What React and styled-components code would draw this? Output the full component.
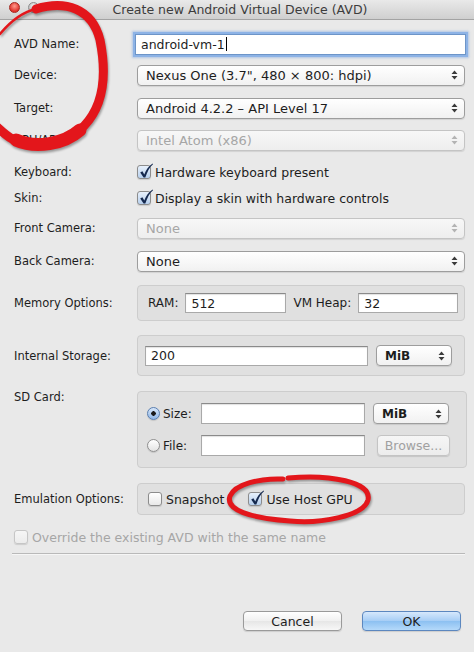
import React from "react";
import styled, { createGlobalStyle } from "styled-components";

const GlobalStyle = createGlobalStyle`
  html, body {
    margin: 0;
    padding: 0;
    background: #e9e9e9;
  }
  body {
    font-family: "DejaVu Sans", "Liberation Sans", sans-serif;
    font-size: 11.5px;
    color: #1d1d1d;
  }
  * { box-sizing: border-box; }
`;

const Window = styled.div`
  position: relative;
  width: 474px;
  height: 652px;
  overflow: hidden;
  background: #e9e9e9;
`;

const TitleBar = styled.div`
  height: 20px;
  display: grid;
  grid-template-columns: 60px 1fr 60px;
  align-items: center;
  background: linear-gradient(#e9e9e9, #cfcfcf);
  border-bottom: 1px solid #a3a3a3;
  color: #3c3c3c;
  font-size: 12.5px;
`;

const Lights = styled.div`
  display: flex;
  gap: 8px;
  padding-left: 9px;
  align-self: start;
  padding-top: 2px;
`;

const Light = styled.span`
  width: 11px;
  height: 11px;
  border-radius: 50%;
  background: ${(p) =>
    p.red
      ? "radial-gradient(circle at 50% 35%, #ff9a8c, #e0302a 70%)"
      : "radial-gradient(circle at 50% 35%, #f4f4f4, #b9b9b9 70%)"};
  border: 1px solid ${(p) => (p.red ? "#a3271f" : "#8d8d8d")};
`;

const Title = styled.div`
  text-align: center;
  padding-left: 6px;
`;

const Form = styled.div`
  padding: 9px 9px 0 14px;
  display: flex;
  flex-direction: column;
`;

const Row = styled.div`
  display: grid;
  grid-template-columns: 123px 1fr;
  align-items: ${(p) => (p.top ? "start" : "center")};
  height: ${(p) => p.h}px;
  margin-top: ${(p) => p.mt || 0}px;
`;

const FullRow = styled.div`
  display: flex;
  align-items: center;
  height: 24px;
  margin-top: 10px;
`;

const Label = styled.div`
  white-space: nowrap;
  color: ${(p) => (p.disabled ? "#a4a4a4" : "#1d1d1d")};
  margin-top: ${(p) => p.mt || 0}px;
`;

const TextField = styled.div`
  height: ${(p) => p.h || 20}px;
  width: ${(p) => (p.w ? `${p.w}px` : "auto")};
  flex: ${(p) => (p.w ? "none" : "1")};
  background: #fff;
  border: 1px solid #a9a9a9;
  border-top-color: #8a8a8a;
  box-shadow: inset 0 1px 1px rgba(0, 0, 0, 0.12);
  padding: 0 5px;
  display: flex;
  align-items: center;
  font-size: 12.5px;
`;

const FocusField = styled(TextField)`
  margin: 0 -1px 0 -2px;
  height: 21px;
  border-color: #6d95c8;
  box-shadow: 0 0 0 2px #8db3e6, 0 0 2px 3px rgba(120, 165, 225, 0.5);
`;

const Caret = styled.span`
  display: inline-block;
  width: 1px;
  height: 14px;
  background: #000;
  margin-left: 1px;
`;

const SelectBox = styled.div`
  height: 21px;
  width: ${(p) => (p.w ? `${p.w}px` : "auto")};
  flex: ${(p) => (p.w ? "none" : "1")};
  border-radius: 4px;
  border: 1px solid ${(p) => (p.disabled ? "#c4c4c4" : "#9d9d9d")};
  background: ${(p) =>
    p.disabled
      ? "linear-gradient(#f7f7f7, #eeeeee)"
      : "linear-gradient(#ffffff, #f1f1f1)"};
  box-shadow: 0 1px 1px rgba(0, 0, 0, 0.1);
  display: flex;
  align-items: center;
  justify-content: space-between;
  padding: 0 6px 0 8px;
  font-size: ${(p) => (p.small ? 12 : 13)}px;
  font-weight: ${(p) => (p.small ? 600 : 400)};
  color: ${(p) => (p.disabled ? "#a6a6a6" : "#1d1d1d")};
`;

const Arrows = ({ disabled }) => (
  <svg width="7" height="10" viewBox="0 0 7 10">
    <path d="M0.5 4 L3.5 0.5 L6.5 4 Z M0.5 6 L3.5 9.5 L6.5 6 Z" fill={disabled ? "#b3b3b3" : "#3a3a3a"} />
  </svg>
);

const Select = ({ children, disabled, w, small }) => (
  <SelectBox disabled={disabled} w={w} small={small}>
    <span>{children}</span>
    <Arrows disabled={disabled} />
  </SelectBox>
);

const CheckRow = styled.div`
  display: flex;
  align-items: center;
  gap: 4px;
  white-space: nowrap;
  font-size: 12.5px;
  color: ${(p) => (p.disabled ? "#a6a6a6" : "#1d1d1d")};
  margin-left: ${(p) => p.ml || 0}px;
`;

const Box = styled.span`
  position: relative;
  width: 14px;
  height: 14px;
  flex: none;
  border-radius: 3px;
  border: 1px solid ${(p) => (p.disabled ? "#c6c6c6" : "#8c8c8c")};
  background: ${(p) =>
    p.checked
      ? "linear-gradient(#e7f0fb, #b7d0ee)"
      : p.disabled
      ? "linear-gradient(#f6f6f6, #ececec)"
      : "linear-gradient(#ffffff, #e8e8e8)"};
  box-shadow: 0 1px 1px rgba(0, 0, 0, 0.12);

  svg {
    position: absolute;
    left: 0px;
    top: -4px;
  }
`;

const Checkbox = ({ checked, disabled, children, ml }) => (
  <CheckRow disabled={disabled} ml={ml}>
    <Box checked={checked} disabled={disabled}>
      {checked && (
        <svg width="16" height="18" viewBox="0 0 16 18">
          <path
            d="M2.2 10.5 L4.4 9.2 L6.3 12.6 C8 8 10.5 4.2 14.6 1.5 L15 2.3 C11.5 5.5 9.3 9.6 7.3 15.6 L5.6 15.6 Z"
            fill="#15294f"
          />
        </svg>
      )}
    </Box>
    {children}
  </CheckRow>
);

const Radio = styled.span`
  width: 13px;
  height: 13px;
  flex: none;
  border-radius: 50%;
  border: 1px solid ${(p) => (p.on ? "#5a7fb0" : "#8f8f8f")};
  background: ${(p) =>
    p.on
      ? "radial-gradient(circle, #1a1a1a 0 2px, transparent 2.5px), linear-gradient(#d7e6f9, #8fb6e6)"
      : "linear-gradient(#ffffff, #e3e3e3)"};
  box-shadow: 0 1px 1px rgba(0, 0, 0, 0.12);
`;

const Group = styled.div`
  height: ${(p) => p.h}px;
  background: #e0e0e0;
  border: 1px solid #cdcdcd;
  border-radius: 4px;
  display: flex;
  flex-direction: ${(p) => (p.column ? "column" : "row")};
  align-items: ${(p) => (p.column ? "stretch" : "center")};
  justify-content: ${(p) => (p.column ? "center" : "flex-start")};
  gap: ${(p) => p.gap || 0}px;
  padding: ${(p) => p.pad};
`;

const Inline = styled.div`
  display: flex;
  align-items: center;
  gap: ${(p) => p.gap || 0}px;
`;

const FieldLabel = styled.span`
  font-size: 12px;
  width: ${(p) => (p.w ? `${p.w}px` : "auto")};
  flex: none;
  display: flex;
  align-items: center;
  gap: 3px;
`;

const Spacer = styled.span`
  width: ${(p) => p.w}px;
  flex: none;
`;

const PushButton = styled.div`
  width: ${(p) => p.w}px;
  height: ${(p) => p.h || 20}px;
  border-radius: 4px;
  display: flex;
  align-items: center;
  justify-content: center;
  font-size: 12.5px;
  color: ${(p) => (p.disabled ? "#a0a0a0" : "#1d1d1d")};
  border: 1px solid
    ${(p) => (p.primary ? "#5c87bf" : p.disabled ? "#c4c4c4" : "#9a9a9a")};
  background: ${(p) =>
    p.primary
      ? "linear-gradient(#d6e8fc, #a6cdf5 50%, #8cc0f1 51%, #b4d9fa)"
      : p.disabled
      ? "linear-gradient(#f6f6f6, #ececec)"
      : "linear-gradient(#ffffff, #f0f0f0 50%, #e6e6e6 51%, #f7f7f7)"};
  box-shadow: 0 1px 1px rgba(0, 0, 0, 0.12);
`;

const Separator = styled.div`
  margin: 4px 0 0 -2px;
  height: 2px;
  border-top: 1px solid #b9b9b9;
  border-bottom: 1px solid #f6f6f6;
`;

const Footer = styled.div`
  display: flex;
  justify-content: flex-end;
  gap: 20px;
  margin-top: 56px;
  padding-right: 4px;
`;

const Annotations = styled.svg`
  position: absolute;
  left: 0;
  top: 0;
  pointer-events: none;
  filter: drop-shadow(1px 2px 1px rgba(0, 0, 0, 0.35));
`;

export default function App() {
  return (
    <Window>
      <GlobalStyle />
      <TitleBar>
        <Lights>
          <Light red />
          <Light />
        </Lights>
        <Title>Create new Android Virtual Device (AVD)</Title>
        <span />
      </TitleBar>

      <Form>
        <Row h={30}>
          <Label>AVD Name:</Label>
          <FocusField>
            android-vm-1
            <Caret />
          </FocusField>
        </Row>
        <Row h={32}>
          <Label>Device:</Label>
          <Select>Nexus One (3.7", 480 × 800: hdpi)</Select>
        </Row>
        <Row h={34}>
          <Label>Target:</Label>
          <Select>Android 4.2.2 – API Level 17</Select>
        </Row>
        <Row h={30}>
          <Label>CPU/ABI:</Label>
          <Select disabled>Intel Atom (x86)</Select>
        </Row>
        <Row h={34}>
          <Label>Keyboard:</Label>
          <Checkbox checked>Hardware keyboard present</Checkbox>
        </Row>
        <Row h={18}>
          <Label>Skin:</Label>
          <Checkbox checked>Display a skin with hardware controls</Checkbox>
        </Row>
        <Row h={42}>
          <Label>Front Camera:</Label>
          <Select disabled>None</Select>
        </Row>
        <Row h={24}>
          <Label>Back Camera:</Label>
          <Select>None</Select>
        </Row>

        <Row h={36} mt={12}>
          <Label>Memory Options:</Label>
          <Group h={36} pad="0 9px 0 10px" gap={7}>
            <FieldLabel>RAM:</FieldLabel>
            <TextField w={101}>512</TextField>
            <FieldLabel>VM Heap:</FieldLabel>
            <TextField w={100}>32</TextField>
          </Group>
        </Row>

        <Row h={41} mt={14}>
          <Label>Internal Storage:</Label>
          <Group h={41} pad="0 12px 0 7px" gap={8}>
            <TextField>200</TextField>
            <Select w={76} small>MiB</Select>
          </Group>
        </Row>

        <Row h={77} mt={15} top>
          <Label mt={-1}>SD Card:</Label>
          <Group h={77} column gap={11} pad="0 16px 0 9px">
            <Inline>
              <FieldLabel w={54}>
                <Radio on />
                Size:
              </FieldLabel>
              <TextField w={164} h={21} />
              <Spacer w={8} />
              <Select w={76} small>MiB</Select>
            </Inline>
            <Inline>
              <FieldLabel w={54}>
                <Radio />
                File:
              </FieldLabel>
              <TextField w={164} h={21} />
              <Spacer w={12} />
              <PushButton w={73} h={21} disabled>
                Browse...
              </PushButton>
            </Inline>
          </Group>
        </Row>

        <Row h={32} mt={15}>
          <Label>Emulation Options:</Label>
          <Group h={32} pad="0 0 0 10px">
            <Checkbox>Snapshot</Checkbox>
            <Checkbox checked ml={24}>
              Use Host GPU
            </Checkbox>
          </Group>
        </Row>

        <FullRow>
          <Checkbox disabled>Override the existing AVD with the same name</Checkbox>
        </FullRow>

        <Separator />

        <Footer>
          <PushButton w={99}>Cancel</PushButton>
          <PushButton w={99} primary>
            OK
          </PushButton>
        </Footer>
      </Form>

      <Annotations width="474" height="652" viewBox="0 0 474 652">
        <path
          d="M0 34 C10 22 22 12 36 9"
          fill="none"
          stroke="#e3161b"
          strokeWidth="2.5"
          strokeLinecap="round"
        />
        <path
          d="M36 9 C65 0 92 8 100 40 C107 75 104 105 84 126 C66 145 34 150 14 140 C6 136 1 131 -6 124"
          fill="none"
          stroke="#e3161b"
          strokeWidth="9"
          strokeLinecap="round"
        />
        <path
          d="M80 130 C64 144 36 149 16 140"
          fill="none"
          stroke="#e3161b"
          strokeWidth="13"
          strokeLinecap="round"
        />
        <path
          d="M288 478 C330 474 372 482 368 500 C364 516 320 524 290 521 C250 518 225 510 230 496 C235 484 260 478 283 479"
          fill="none"
          stroke="#e3161b"
          strokeWidth="5"
          strokeLinecap="round"
        />
      </Annotations>
    </Window>
  );
}
